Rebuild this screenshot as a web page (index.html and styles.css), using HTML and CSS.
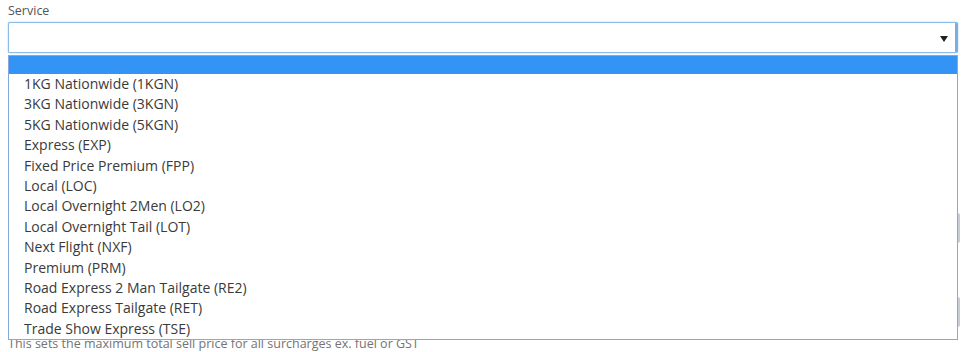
FILE: index.html
```html
<!DOCTYPE html>
<html lang="en">
<head>
  <meta charset="UTF-8">
  <meta name="viewport" content="width=device-width, initial-scale=1">
  <title>Service</title>
  <link rel="stylesheet" href="styles.css">
</head>
<body>
  <div class="form-group">
    <label class="control-label" for="service">Service</label>
    <div class="select-box" id="service">
      <span class="select-arrow"></span>
    </div>
  </div>

  <div class="form-body">
    <div class="form-group">
      <div class="text-input"></div>
    </div>
    <div class="form-group">
      <div class="text-input"></div>
      <p class="help-block">This sets the maximum total sell price for all surcharges ex. fuel or GST</p>
    </div>

    <ul class="dropdown">
      <li class="selected">&nbsp;</li>
      <li>1KG Nationwide (1KGN)</li>
      <li>3KG Nationwide (3KGN)</li>
      <li>5KG Nationwide (5KGN)</li>
      <li>Express (EXP)</li>
      <li>Fixed Price Premium (FPP)</li>
      <li>Local (LOC)</li>
      <li>Local Overnight 2Men (LO2)</li>
      <li>Local Overnight Tail (LOT)</li>
      <li>Next Flight (NXF)</li>
      <li>Premium (PRM)</li>
      <li>Road Express 2 Man Tailgate (RE2)</li>
      <li>Road Express Tailgate (RET)</li>
      <li>Trade Show Express (TSE)</li>
    </ul>
  </div>
</body>
</html>
```

FILE: styles.css
```css
body {
  margin: 0;
  padding: 0 15px 0 8px;
  font-family: "Open Sans", sans-serif;
  color: #333;
  background: #fff;
  overflow: hidden;
}

.control-label {
  display: block;
  font-size: 12.5px;
  line-height: 18px;
  color: #555;
  margin-top: 2px;
  margin-bottom: 2px;
}

.select-box {
  position: relative;
  width: 950px;
  height: 31px;
  box-sizing: border-box;
  border: 1px solid #8bbbe8;
  border-right: 3px solid #7aaee3;
  border-radius: 2px;
  box-shadow: 0 0 2px rgba(102, 175, 233, 0.6);
  background: #fff;
}
.select-arrow {
  position: absolute;
  right: 7px;
  top: 13px;
  width: 0;
  height: 0;
  border-left: 4px solid transparent;
  border-right: 4px solid transparent;
  border-top: 6px solid #222;
}

.form-body {
  position: relative;
  margin-top: 2px;
  padding-top: 158px;
}
.form-body .form-group {
  margin-bottom: 54px;
}
.form-body .form-group:last-child {
  margin-bottom: 0;
}
.text-input {
  height: 30px;
  box-sizing: border-box;
  border: 1px solid #ccd3dc;
  border-right: 2px solid #c6cdd8;
  border-radius: 2px;
}
.help-block {
  margin: 8px 0 0;
  font-size: 12.5px;
  line-height: 17px;
  color: #737373;
}

.dropdown {
  position: absolute;
  top: 0;
  left: 0;
  width: 950px;
  margin: 0;
  padding: 0;
  list-style: none;
  box-sizing: border-box;
  border: 1px solid #86a8dc;
  background: #fff;
}
.dropdown li {
  height: 20.4px;
  line-height: 20.4px;
  padding-left: 15px;
  font-size: 14px;
  color: #3a3a3a;
  white-space: nowrap;
}
.dropdown li.selected {
  height: 18px;
  background: #3394f6;
}
```
